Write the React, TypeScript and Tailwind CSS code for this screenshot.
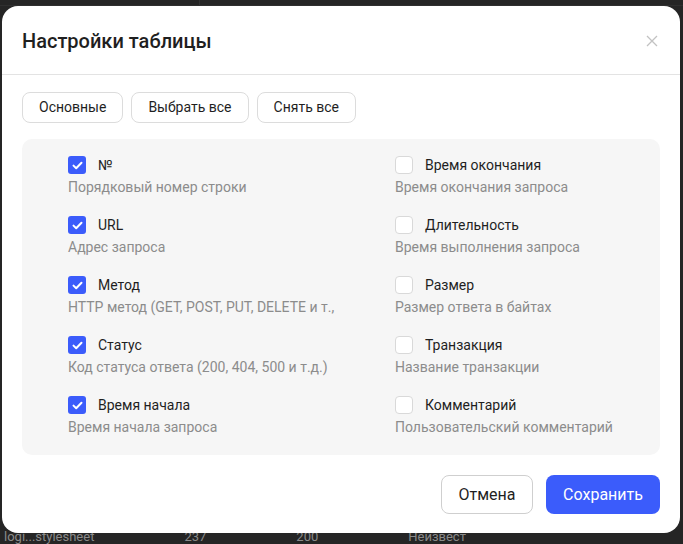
import { useState } from "react";

type Column = {
  key: string;
  label: string;
  description: string;
};

const leftColumns: Column[] = [
  { key: "num", label: "№", description: "Порядковый номер строки" },
  { key: "url", label: "URL", description: "Адрес запроса" },
  { key: "method", label: "Метод", description: "HTTP метод (GET, POST, PUT, DELETE и т.," },
  { key: "status", label: "Статус", description: "Код статуса ответа (200, 404, 500 и т.д.)" },
  { key: "start", label: "Время начала", description: "Время начала запроса" },
];

const rightColumns: Column[] = [
  { key: "end", label: "Время окончания", description: "Время окончания запроса" },
  { key: "duration", label: "Длительность", description: "Время выполнения запроса" },
  { key: "size", label: "Размер", description: "Размер ответа в байтах" },
  { key: "transaction", label: "Транзакция", description: "Название транзакции" },
  { key: "comment", label: "Комментарий", description: "Пользовательский комментарий" },
];

const Checkbox = ({ checked, onChange }: { checked: boolean; onChange: () => void }) => {
  return (
    <button
      onClick={onChange}
      className={
        checked
          ? "flex h-[18px] w-[18px] shrink-0 items-center justify-center rounded-[3px] bg-[#3b5cfb]"
          : "flex h-[18px] w-[18px] shrink-0 items-center justify-center rounded-[4px] border border-[#d9d9d9] bg-white"
      }
    >
      {checked && (
        <svg width="11" height="9" viewBox="0 0 11 9" fill="none">
          <path d="M1.5 4.6L4.2 7.2L9.5 1.8" stroke="white" strokeWidth="2" strokeLinecap="round" strokeLinejoin="round" />
        </svg>
      )}
    </button>
  );
};

const ColumnItem = ({
  column,
  checked,
  onToggle,
}: {
  column: Column;
  checked: boolean;
  onToggle: () => void;
}) => {
  return (
    <div className="flex flex-col">
      <label className="flex h-5 items-center gap-3 text-[14px] text-[#1f1f1f]">
        <Checkbox checked={checked} onChange={onToggle} />
        {column.label}
      </label>
      <p className="mt-[2px] h-5 whitespace-nowrap text-[14px] leading-5 text-[#8c8c8c]">
        {column.description}
      </p>
    </div>
  );
};

export default function App() {
  const [selected, setSelected] = useState<Record<string, boolean>>({
    num: true,
    url: true,
    method: true,
    status: true,
    start: true,
  });

  const toggle = (key: string) => setSelected((s) => ({ ...s, [key]: !s[key] }));

  return (
    <div className="relative h-[544px] w-[683px] overflow-hidden bg-[#252525] font-['Roboto',sans-serif]">
      {/* table behind the overlay */}
      <div className="absolute left-0 top-0 flex h-[6px] w-full border-b border-[#2f2f2f]">
        <div className="w-[200px] border-r border-[#333]" />
      </div>
      <div className="absolute bottom-0 left-0 flex h-[11px] w-full gap-[90px] pl-1 text-[13px] leading-[8px] text-[#8a8a8a]">
        <span>logi...stylesheet</span>
        <span>237</span>
        <span>200</span>
        <span>Неизвест</span>
      </div>

      <div className="absolute left-[2px] top-[6px] flex h-[527px] w-[678px] flex-col rounded-2xl bg-white">
        <div className="flex h-[69px] items-center justify-between border-b border-[#e3e3e3] px-5 pt-[1px]">
          <h1 className="text-[20px] font-medium text-[#1f1f1f]">Настройки таблицы</h1>
          <button className="mr-[2px] text-[#c2c2c2]">
            <svg width="12" height="12" viewBox="0 0 12 12" fill="none">
              <path d="M1 1L11 11M11 1L1 11" stroke="currentColor" strokeWidth="1.3" />
            </svg>
          </button>
        </div>

        <div className="px-5 pt-[17px]">
          <div className="flex gap-2">
            <button className="h-[31px] rounded-lg border border-[#dcdcdc] px-4 text-[14px] text-[#1f1f1f]">
              Основные
            </button>
            <button className="h-[31px] rounded-lg border border-[#dcdcdc] px-4 text-[14px] text-[#1f1f1f]">
              Выбрать все
            </button>
            <button className="h-[31px] rounded-lg border border-[#dcdcdc] px-4 text-[14px] text-[#1f1f1f]">
              Снять все
            </button>
          </div>

          <div className="mt-4 grid grid-cols-[267px_1fr] gap-x-[60px] rounded-[10px] bg-[#f6f6f6] pb-[18px] pl-[46px] pt-[16px]">
            <div className="flex flex-col gap-[18px]">
              {leftColumns.map((c) => (
                <ColumnItem key={c.key} column={c} checked={!!selected[c.key]} onToggle={() => toggle(c.key)} />
              ))}
            </div>
            <div className="flex flex-col gap-[18px]">
              {rightColumns.map((c) => (
                <ColumnItem key={c.key} column={c} checked={!!selected[c.key]} onToggle={() => toggle(c.key)} />
              ))}
            </div>
          </div>

          <div className="mt-5 flex justify-end gap-[13px]">
            <button className="h-[39px] w-[92px] rounded-lg border border-[#cfcfcf] text-[16px] text-[#1f1f1f]">
              Отмена
            </button>
            <button className="h-[39px] w-[114px] rounded-lg bg-[#3b5cfb] text-[16px] text-white">
              Сохранить
            </button>
          </div>
        </div>
      </div>
    </div>
  );
}
